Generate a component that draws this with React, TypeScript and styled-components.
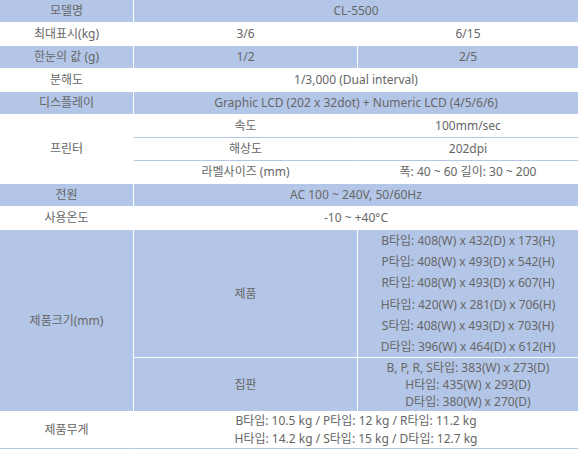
import React from 'react';
import styled, { createGlobalStyle } from 'styled-components';

const BLUE = '#b4c6e7';

const GlobalStyle = createGlobalStyle`
  html, body {
    margin: 0;
    padding: 0;
    background: #fff;
  }
  body {
    font-family: "Noto Sans", "Noto Sans CJK KR", sans-serif;
  }
`;

const SpecTable = styled.table`
  width: 578px;
  table-layout: fixed;
  border-collapse: separate;
  border-spacing: 0;
  font-size: 12px;
  color: #666;
`;

const Row = styled.tr<{ $blue?: boolean }>`
  background: ${p => (p.$blue ? BLUE : '#fff')};
`;

const Cell = styled.td<{ $h?: number; $blueLine?: boolean }>`
  box-sizing: border-box;
  height: ${p => p.$h ?? 23}px;
  padding: 0;
  text-align: center;
  vertical-align: middle;
  white-space: nowrap;
  line-height: 18px;
  border-right: 1px solid #fff;
  border-bottom: 1px solid ${p => (p.$blueLine ? BLUE : '#fff')};

  &:last-child {
    border-right: none;
  }
`;

const Lines = styled.div<{ $lh: number }>`
  line-height: ${p => p.$lh}px;
`;

const sizes = [
  'B타입: 408(W) x 432(D) x 173(H)',
  'P타입: 408(W) x 493(D) x 542(H)',
  'R타입: 408(W) x 493(D) x 607(H)',
  'H타입: 420(W) x 281(D) x 706(H)',
  'S타입: 408(W) x 493(D) x 703(H)',
  'D타입: 396(W) x 464(D) x 612(H)',
];

const pallet = ['B, P, R, S타입: 383(W) x 273(D)', 'H타입: 435(W) x 293(D)', 'D타입: 380(W) x 270(D)'];

const weights = ['B타입: 10.5 kg / P타입: 12 kg / R타입: 11.2 kg', 'H타입: 14.2 kg / S타입: 15 kg / D타입: 12.7 kg'];

const App = () => {
  return (
    <>
      <GlobalStyle />
      <SpecTable>
        <colgroup>
          <col style={{ width: 134 }} />
          <col style={{ width: 224 }} />
          <col />
        </colgroup>
        <tbody>
          <Row $blue>
            <Cell>모델명</Cell>
            <Cell colSpan={2}>CL-5500</Cell>
          </Row>
          <Row>
            <Cell>최대표시(kg)</Cell>
            <Cell>3/6</Cell>
            <Cell>6/15</Cell>
          </Row>
          <Row $blue>
            <Cell>한눈의 값 (g)</Cell>
            <Cell>1/2</Cell>
            <Cell>2/5</Cell>
          </Row>
          <Row>
            <Cell>분해도</Cell>
            <Cell colSpan={2}>1/3,000 (Dual interval)</Cell>
          </Row>
          <Row $blue>
            <Cell>디스플레이</Cell>
            <Cell colSpan={2}>Graphic LCD (202 x 32dot) + Numeric LCD (4/5/6/6)</Cell>
          </Row>
          <Row>
            <Cell rowSpan={3}>프린터</Cell>
            <Cell $blueLine>속도</Cell>
            <Cell $blueLine>100mm/sec</Cell>
          </Row>
          <Row>
            <Cell $blueLine>해상도</Cell>
            <Cell $blueLine>202dpi</Cell>
          </Row>
          <Row>
            <Cell>라벨사이즈 (mm)</Cell>
            <Cell>폭: 40 ~ 60 길이: 30 ~ 200</Cell>
          </Row>
          <Row $blue>
            <Cell>전원</Cell>
            <Cell colSpan={2}>AC 100 ~ 240V, 50/60Hz</Cell>
          </Row>
          <Row>
            <Cell>사용온도</Cell>
            <Cell colSpan={2}>-10 ~ +40°C</Cell>
          </Row>
          <Row $blue>
            <Cell rowSpan={2}>제품크기(mm)</Cell>
            <Cell $h={128}>제품</Cell>
            <Cell $h={128}>
              <Lines $lh={21.2}>
                {sizes.map(s => (
                  <div key={s}>{s}</div>
                ))}
              </Lines>
            </Cell>
          </Row>
          <Row $blue>
            <Cell $h={54}>집판</Cell>
            <Cell $h={54}>
              <Lines $lh={17}>
                {pallet.map(s => (
                  <div key={s}>{s}</div>
                ))}
              </Lines>
            </Cell>
          </Row>
          <Row>
            <Cell $h={37} $blueLine>
              제품무게
            </Cell>
            <Cell $h={37} $blueLine colSpan={2}>
              <Lines $lh={18}>
                {weights.map(s => (
                  <div key={s}>{s}</div>
                ))}
              </Lines>
            </Cell>
          </Row>
        </tbody>
      </SpecTable>
    </>
  );
};

export default App;
